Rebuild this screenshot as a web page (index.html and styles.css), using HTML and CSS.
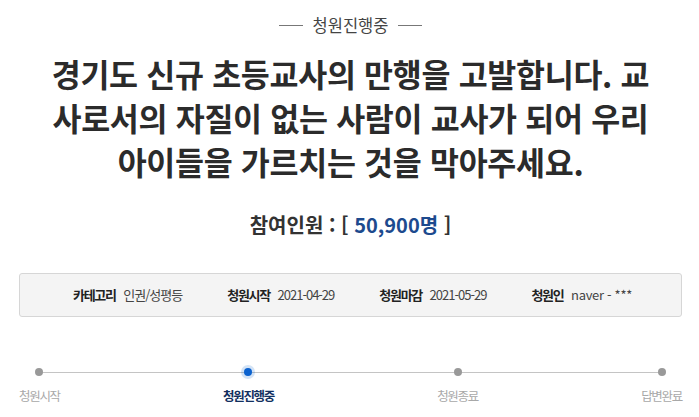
FILE: index.html
```html
<!DOCTYPE html>
<html lang="ko">
<head>
    <meta charset="UTF-8">
    <meta name="viewport" content="width=device-width, initial-scale=1.0">
    <title>청원진행중</title>
    <link rel="stylesheet" href="styles.css">
</head>
<body>
    <div class="petition">
        <div class="status-label"><span>청원진행중</span></div>

        <h3 class="petition-title">경기도 신규 초등교사의 만행을 고발합니다. 교사로서의 자질이 없는 사람이 교사가 되어 우리 아이들을 가르치는 것을 막아주세요.</h3>

        <h2 class="counter">참여인원 : [ <span class="counter-num">50,900명</span> ]</h2>

        <ul class="info-box">
            <li><strong>카테고리</strong> 인권/성평등</li>
            <li><strong>청원시작</strong> 2021-04-29</li>
            <li><strong>청원마감</strong> 2021-05-29</li>
            <li><strong>청원인</strong> <span class="latin">naver - ***</span></li>
        </ul>

        <ol class="progress">
            <li class="step"><i class="dot"></i><span>청원시작</span></li>
            <li class="step active"><i class="dot"></i><span>청원진행중</span></li>
            <li class="step"><i class="dot"></i><span>청원종료</span></li>
            <li class="step"><i class="dot"></i><span>답변완료</span></li>
        </ol>
    </div>
</body>
</html>
```

FILE: styles.css
```css
body {
    margin: 0;
    padding: 0;
    background-color: #fff;
    color: #333;
    font-family: 'Noto Sans CJK KR', 'Noto Sans', sans-serif;
}

.petition {
    padding: 0 17px 0 19px;
}

.status-label {
    display: flex;
    justify-content: center;
    padding-top: 12px;
    height: 26px;
    font-size: 16.5px;
    line-height: 24px;
    color: #444;
}

.status-label span {
    display: flex;
    align-items: center;
    gap: 10px;
}

.status-label span::before,
.status-label span::after {
    content: '';
    display: block;
    width: 24px;
    height: 1px;
    background-color: #777;
}

.petition-title {
    width: 600px;
    margin: 13px auto 0;
    font-size: 31.5px;
    line-height: 44px;
    font-weight: 700;
    color: #2b2b2b;
    text-align: center;
    word-break: break-all;
    letter-spacing: -0.3px;
}

.counter {
    margin: 28px 0 0;
    font-size: 20px;
    line-height: 28px;
    font-weight: 700;
    color: #333;
    text-align: center;
}

.counter-num {
    color: #1d4a8e;
}

.info-box {
    display: flex;
    justify-content: center;
    gap: 45px;
    list-style: none;
    margin: 34px 0 0;
    padding: 0 0 0 4px;
    height: 42px;
    line-height: 42px;
    background-color: #f4f4f4;
    border: 1px solid #d6d6d6;
    border-radius: 3px;
    font-size: 13px;
    letter-spacing: -1px;
    color: #444;
}

.info-box strong {
    color: #222;
    margin-right: 5px;
    letter-spacing: -1.3px;
}

.info-box .latin {
    letter-spacing: -0.3px;
}

.progress {
    display: flex;
    justify-content: space-between;
    list-style: none;
    margin: 45px 0 0;
    padding: 0;
    position: relative;
}

.progress::before {
    content: '';
    position: absolute;
    left: 21px;
    right: 21px;
    top: 10px;
    height: 1px;
    background-color: #c4c4c4;
}

.step {
    display: flex;
    flex-direction: column;
    align-items: center;
    position: relative;
    font-size: 12.5px;
    letter-spacing: -1.3px;
    color: #a8a8a8;
}

.dot {
    width: 8px;
    height: 8px;
    margin: 6px 0 10px;
    border-radius: 50%;
    background-color: #999;
}

.step.active {
    color: #12305f;
    font-weight: 700;
}

.step.active .dot {
    background-color: #0b62cf;
    box-shadow: 0 0 0 3px rgba(11, 98, 207, 0.18);
}
```
